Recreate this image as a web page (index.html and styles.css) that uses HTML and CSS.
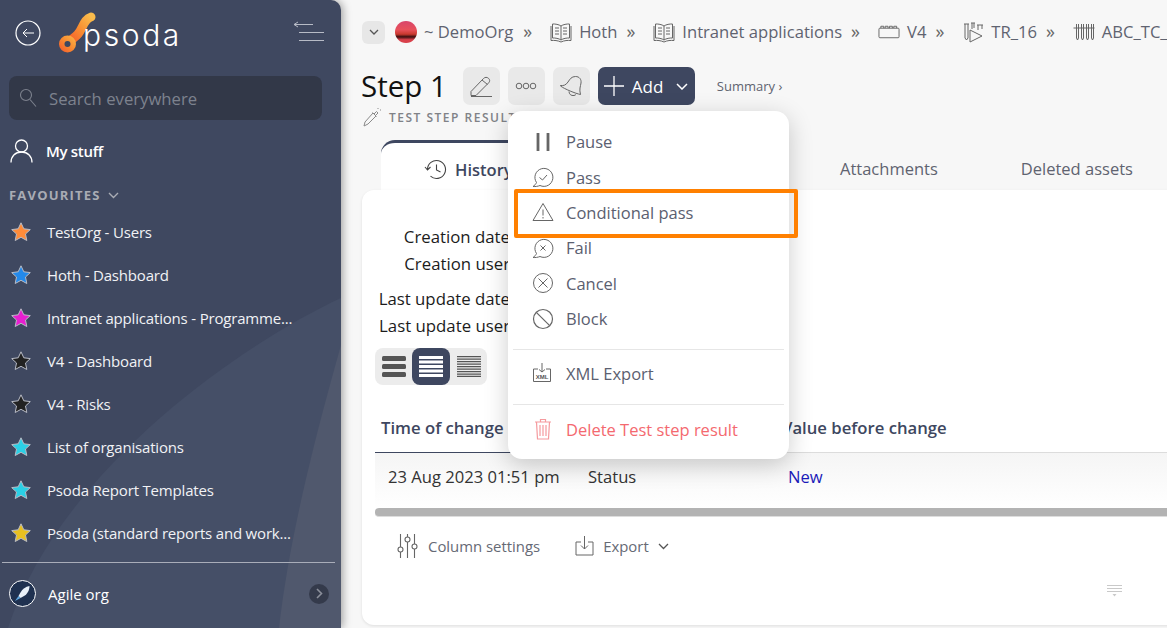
FILE: index.html
```html
<!DOCTYPE html>
<html lang="en">

<head>
    <meta charset="UTF-8">
    <meta name="viewport" content="width=device-width, initial-scale=1.0">
    <title>Step 1 - Psoda</title>
    <link rel="stylesheet" href="styles.css">
</head>

<body>
    <svg class="defs" width="0" height="0">
        <defs>
            <symbol id="star" viewBox="0 0 22 22">
                <path d="M11 1.800l2.800 6 6.500.8-4.800 4.400 1.300 6.500-5.800-3.200-5.800 3.200 1.300-6.500L1.700 8.600l6.500-.8z" stroke="#b9bcc6" stroke-width="1" stroke-linejoin="round" />
            </symbol>
            <symbol id="book" viewBox="0 0 22 22">
                <path d="M11 5C9 3.500 5 2.800 2.500 3v14c2.500-.2 6.500.5 8.500 2 2-1.500 6-2.200 8.500-2V3C17 2.800 13 3.500 11 5zM11 5v14M1 5v14.500c3-.3 7 0 10 1.500 3-1.500 7-1.800 10-1.500V5M5 7h4M5 10h4M5 13h4M13 7h4M13 10h4M13 13h4" fill="none" stroke="#666" stroke-width="1" />
            </symbol>
            <linearGradient id="logo-grad" x1="0" y1="1" x2="1" y2="0">
                <stop offset="0" stop-color="#f4562a" />
                <stop offset="0.55" stop-color="#f88f32" />
                <stop offset="1" stop-color="#f9bb4c" />
            </linearGradient>
        </defs>
    </svg>

    <div class="app">
        <aside class="sidebar">
            <svg class="sidebar-bg" width="341" height="628" viewBox="0 0 341 628">
                <path d="M341 298C240 345 60 470 8 628H341z" fill="#454f67" />
                <path d="M341 345C320 420 290 530 279 628H341z" fill="#50586d" />
            </svg>

            <div class="side-head">
                <svg class="back-icon" width="26" height="26" viewBox="0 0 26 26" fill="none" stroke="#fff">
                    <circle cx="13" cy="13" r="12" stroke-width="1.200" />
                    <path d="M19 13H8M12 9l-4 4 4 4" stroke-width="1" />
                </svg>
                <div class="logo">
                    <svg width="40" height="44" viewBox="0 0 40 44">
                        <path d="M33 7C26 9 25 18 20 24 17 28 13 29 10 33" fill="none" stroke="url(#logo-grad)" stroke-width="9" stroke-linecap="round" />
                        <circle cx="9.500" cy="34" r="8.500" fill="url(#logo-grad)" />
                        <circle cx="9.500" cy="34" r="3" fill="#3f4860" />
                    </svg>
                    <span class="logo-text">psoda</span>
                </div>
                <svg class="menu-icon" width="32" height="22" viewBox="0 0 32 22" fill="none" stroke="#b7bbc6" stroke-width="1">
                    <path d="M1 3.500h19M1 3.500l4-2.500M1 3.500l4 2.500M6 11.500h25M6 19.500h25" />
                </svg>
            </div>

            <div class="search">
                <svg width="18" height="22" viewBox="0 0 18 22" fill="none" stroke="#7d828e" stroke-width="1.100">
                    <circle cx="7" cy="8" r="5.500" />
                    <path d="M11 12.500l6 7" />
                </svg>
                <span>Search everywhere</span>
            </div>

            <div class="my-stuff">
                <svg width="23" height="24" viewBox="0 0 23 24" fill="none" stroke="#fff" stroke-width="1.300">
                    <circle cx="11.500" cy="7" r="6" />
                    <path d="M1 23.500c0-6 4-10.500 10.500-10.500S22 17.500 22 23.500" />
                </svg>
                <span>My stuff</span>
            </div>

            <div class="fav-title">FAVOURITES
                <svg width="11" height="7" viewBox="0 0 11 7" fill="none" stroke="#a9acb4" stroke-width="1.400">
                    <path d="M1 1l4.500 4.500L10 1" />
                </svg>
            </div>

            <ul class="fav-list">
                <li><svg class="star-orange"><use href="#star" /></svg><span>TestOrg - Users</span></li>
                <li><svg class="star-blue"><use href="#star" /></svg><span>Hoth - Dashboard</span></li>
                <li><svg class="star-pink"><use href="#star" /></svg><span>Intranet applications - Programme...</span></li>
                <li><svg class="star-black"><use href="#star" /></svg><span>V4 - Dashboard</span></li>
                <li><svg class="star-black"><use href="#star" /></svg><span>V4 - Risks</span></li>
                <li><svg class="star-cyan"><use href="#star" /></svg><span>List of organisations</span></li>
                <li><svg class="star-cyan"><use href="#star" /></svg><span>Psoda Report Templates</span></li>
                <li><svg class="star-gold"><use href="#star" /></svg><span>Psoda (standard reports and work...</span></li>
            </ul>

            <div class="org-row">
                <svg width="27" height="27" viewBox="0 0 27 27">
                    <circle cx="13.500" cy="13.500" r="13" fill="#1f3150" stroke="#fff" stroke-width="1" />
                    <path d="M20.500 6c-4 .5-7 3-9 6.500l-2 3.500 2 2 3.500-2C18.500 14 20.500 10 20.500 6z" fill="#e8f0f8" />
                    <path d="M9.500 16l-3.500 5 5.500-3z" fill="#5fa8e0" />
                </svg>
                <span>Agile org</span>
                <div class="org-next">
                    <svg width="7" height="11" viewBox="0 0 7 11" fill="none" stroke="#8b8f9b" stroke-width="1.600">
                        <path d="M1 1l4.500 4.500L1 10" />
                    </svg>
                </div>
            </div>
        </aside>

        <main class="main">
            <nav class="crumbs">
                <div class="crumb-toggle">
                    <svg width="10" height="6" viewBox="0 0 10 6" fill="none" stroke="#555" stroke-width="1.300">
                        <path d="M1 1l4 4 4-4" />
                    </svg>
                </div>
                <div class="org-pic"></div>
                <span class="crumb-first">~ DemoOrg</span>
                <span class="sep">»</span>
                <svg class="crumb-icon"><use href="#book" /></svg>
                <span>Hoth</span>
                <span class="sep">»</span>
                <svg class="crumb-icon"><use href="#book" /></svg>
                <span>Intranet applications</span>
                <span class="sep">»</span>
                <svg class="crumb-icon" viewBox="0 0 23 22" fill="none" stroke="#666" stroke-width="1">
                    <rect x="1" y="7" width="21" height="10" rx="1" />
                    <path d="M3 7V5h3v2M7.500 7V5h3v2M12 7V5h3v2M16.500 7V5h3v2" />
                </svg>
                <span>V4</span>
                <span class="sep">»</span>
                <svg class="crumb-icon" viewBox="0 0 22 22" fill="none" stroke="#666" stroke-width="1">
                    <path d="M2 3h5M3 3v14l1.500 2L6 17V3M9 2h4M10 2v6M12 2v5M15 4h6M16 4v5M20 4v4M8 9l12 6-12 6z" />
                </svg>
                <span>TR_16</span>
                <span class="sep">»</span>
                <svg class="crumb-icon" viewBox="0 0 21 22" fill="none" stroke="#666" stroke-width="1">
                    <path d="M0 7h21M3 3v14l1 2 1-2V3M8 3v14l1 2 1-2V3M13 3v14l1 2 1-2V3M18 3v14l1 2 1-2V3" />
                </svg>
                <span>ABC_TC_</span>
            </nav>

            <div class="title-row">
                <h1>Step 1</h1>
                <div class="tool-btn">
                    <svg width="24" height="22" viewBox="0 0 24 22" fill="none" stroke="#666" stroke-width="1">
                        <path d="M2 16.500L14.500 3.500c1.500-1.500 3.500-1.500 5-.2s1.500 3.200.2 4.500L7 20.500H2zM13 5l5.500 4.500M2 21.500h21" />
                    </svg>
                </div>
                <div class="tool-btn">
                    <svg width="22" height="8" viewBox="0 0 22 8" fill="none" stroke="#666" stroke-width="1">
                        <circle cx="4" cy="4" r="2.800" />
                        <circle cx="11" cy="4" r="2.800" />
                        <circle cx="18" cy="4" r="2.800" />
                    </svg>
                </div>
                <div class="tool-btn">
                    <svg width="24" height="22" viewBox="0 0 24 22" fill="none" stroke="#666" stroke-width="1">
                        <path d="M1.500 10.500c3 .5 5.500-.5 7.500-3.500s3.500-5.500 7.500-5.500 6 3 5.500 6.500-2 6-.5 11.500c-5-1-16-5.500-20-8.500zM10 16.500c0 2.500 2 4.500 5 4 .8-.2 1.500-.5 1.900-1" />
                    </svg>
                </div>
                <div class="add-btn">
                    <svg width="20" height="20" viewBox="0 0 20 20" stroke="#fff" stroke-width="1.300">
                        <path d="M10 0v20M0 10h20" />
                    </svg>
                    <span>Add</span>
                    <svg class="add-caret" width="12" height="7" viewBox="0 0 12 7" fill="none" stroke="#fff" stroke-width="1.500">
                        <path d="M1 1l5 5 5-5" />
                    </svg>
                </div>
                <a class="summary">Summary ›</a>
            </div>

            <div class="type-row">
                <svg width="18" height="20" viewBox="0 0 18 20" fill="none" stroke="#8a8a8a" stroke-width="1">
                    <path d="M1 19l1-4L10 6l3 3-8 8zM9.500 5.500l4 4M11 7l2.500-2.500 1.500 1.500-2.500 2.500M15 1v1M17 3h1" />
                </svg>
                <span>TEST STEP RESULT</span>
            </div>

            <div class="tabs">
                <div class="tab tab-active">
                    <svg width="23" height="21" viewBox="0 0 23 21" fill="none" stroke="#444" stroke-width="1.100">
                        <path d="M3.500 10.500a9 9 0 1 1 3 6.700M1 8l2.500 3L6.500 8M12.500 5.500v5.500l4 2" />
                    </svg>
                    <span>History</span>
                </div>
                <div class="tab tab-attach">Attachments</div>
                <div class="tab tab-deleted">Deleted assets</div>
            </div>

            <section class="card">
                <dl class="details">
                    <div class="detail"><dt>Creation date</dt></div>
                    <div class="detail"><dt>Creation user</dt></div>
                    <div class="detail detail-gap"><dt>Last update date</dt></div>
                    <div class="detail"><dt>Last update user</dt></div>
                </dl>

                <div class="density">
                    <div class="density-btn">
                        <svg width="24" height="21" viewBox="0 0 24 21" fill="#555">
                            <rect y="0" width="24" height="5" rx="1.500" />
                            <rect y="8" width="24" height="5" rx="1.500" />
                            <rect y="16" width="24" height="5" rx="1.500" />
                        </svg>
                    </div>
                    <div class="density-btn density-on">
                        <svg width="24" height="21" viewBox="0 0 24 21" fill="#fff">
                            <rect y="0" width="24" height="3" />
                            <rect y="4.500" width="24" height="3" />
                            <rect y="9" width="24" height="3" />
                            <rect y="13.500" width="24" height="3" />
                            <rect y="18" width="24" height="3" />
                        </svg>
                    </div>
                    <div class="density-btn">
                        <svg width="24" height="21" viewBox="0 0 24 21" stroke="#555" stroke-width="1.200">
                            <path d="M0 .6h24M0 3.100h24M0 5.600h24M0 8.100h24M0 10.600h24M0 13.100h24M0 15.600h24M0 18.100h24M0 20.400h24" />
                        </svg>
                    </div>
                </div>

                <div class="table">
                    <div class="th th-sorted">Time of change</div>
                    <div class="th"></div>
                    <div class="th">Value before change</div>
                    <div class="td">23 Aug 2023 01:51 pm</div>
                    <div class="td">Status</div>
                    <div class="td td-link">New</div>
                </div>
                <div class="scrollbar"></div>

                <div class="table-tools">
                    <div class="table-tool">
                        <svg width="21" height="24" viewBox="0 0 21 24" fill="none" stroke="#666" stroke-width="1.100">
                            <path d="M3.500 0v13M3.500 18v6M10.500 0v3M10.500 8v16M17.500 0v10M17.500 15v9" />
                            <circle cx="3.500" cy="15.500" r="2.500" />
                            <circle cx="10.500" cy="5.500" r="2.500" />
                            <circle cx="17.500" cy="12.500" r="2.500" />
                        </svg>
                        <span>Column settings</span>
                    </div>
                    <div class="table-tool tool-export">
                        <svg width="19" height="20" viewBox="0 0 19 20" fill="none" stroke="#666" stroke-width="1">
                            <path d="M6 6H1v13h17V6h-5M9.500 0v13M6 9.500l3.500 3.500L13 9.500" />
                        </svg>
                        <span>Export</span>
                        <svg class="export-caret" width="11" height="7" viewBox="0 0 11 7" fill="none" stroke="#555" stroke-width="1.300">
                            <path d="M1 1l4.500 4.500L10 1" />
                        </svg>
                    </div>
                </div>

                <svg class="page-size" width="15" height="12" viewBox="0 0 15 12" stroke="#c9c9c9" stroke-width="1">
                    <path d="M0 .5h15M0 3.500h15M0 6.500h15" />
                    <path d="M5.500 9h4l-2 2.500z" fill="#c9c9c9" stroke="none" />
                </svg>
            </section>
        </main>
    </div>

    <div class="menu">
        <div class="menu-item">
            <svg width="22" height="22" viewBox="0 0 22 22" stroke="#666" stroke-width="2.800">
                <path d="M6 2v18M16 2v18" />
            </svg>
            <span>Pause</span>
        </div>
        <div class="menu-item">
            <svg width="22" height="22" viewBox="0 0 22 22" fill="none" stroke="#666" stroke-width="1">
                <path d="M4.500 16.500a9 9 0 1 1 3.500 3c-2 .8-4.500 1.200-7 1 1.500-1 3-2.500 3.500-4zM7.500 11.500l3 2.500 4.500-5" />
            </svg>
            <span>Pass</span>
        </div>
        <div class="menu-item">
            <svg width="22" height="20" viewBox="0 0 22 20" fill="none" stroke="#666" stroke-width="1">
                <path d="M11 1.500L1 18.500h20zM11 7.500v6M11 15v1.500" />
            </svg>
            <span>Conditional pass</span>
        </div>
        <div class="menu-item">
            <svg width="22" height="22" viewBox="0 0 22 22" fill="none" stroke="#666" stroke-width="1">
                <path d="M4.500 16.500a9 9 0 1 1 3.500 3c-2 .8-4.500 1.200-7 1 1.500-1 3-2.500 3.500-4zM8.500 8.500l5 5M13.500 8.500l-5 5" />
            </svg>
            <span>Fail</span>
        </div>
        <div class="menu-item">
            <svg width="22" height="22" viewBox="0 0 22 22" fill="none" stroke="#666" stroke-width="1">
                <circle cx="11" cy="11" r="9.500" />
                <path d="M6.500 6.500l9 9M15.500 6.500l-9 9" />
            </svg>
            <span>Cancel</span>
        </div>
        <div class="menu-item">
            <svg width="22" height="22" viewBox="0 0 22 22" fill="none" stroke="#666" stroke-width="1.200">
                <circle cx="11" cy="11" r="9.500" />
                <path d="M4.300 4.300l13.400 13.400" />
            </svg>
            <span>Block</span>
        </div>
        <div class="menu-line"></div>
        <div class="menu-item">
            <svg width="20" height="20" viewBox="0 0 20 20" fill="none" stroke="#666" stroke-width="1">
                <path d="M6 6H1.500v12.500h17V6H14M10 0v9M7 6.500L10 9l3-2.500" />
                <text x="10" y="16" font-size="6" font-weight="700" fill="#555" stroke="none" text-anchor="middle" font-family="Liberation Sans">XML</text>
            </svg>
            <span>XML Export</span>
        </div>
        <div class="menu-line"></div>
        <div class="menu-item menu-danger">
            <svg width="18" height="22" viewBox="0 0 18 22" fill="none" stroke="#f59a9e" stroke-width="1.200">
                <path d="M1 4h16M6.500 4V1.500h5V4M2.500 4l1 17h11l1-17M6 7v11M9 7v11M12 7v11" />
            </svg>
            <span>Delete Test step result</span>
        </div>
    </div>
    <div class="highlight"></div>
</body>

</html>
```

FILE: styles.css
```css
* {
    box-sizing: border-box;
}

html,
body {
    margin: 0;
    height: 100%;
    overflow: hidden;
}

body {
    font-family: "Open Sans", sans-serif;
    background-color: #f7f7f7;
    color: #5b6070;
}

.defs {
    position: absolute;
}

.app {
    display: flex;
    height: 628px;
}

/* sidebar */
.sidebar {
    position: relative;
    flex: 0 0 341px;
    background-color: #3f4860;
    border-top-right-radius: 10px;
    box-shadow: 2px 0 8px rgba(0, 0, 0, 0.35);
    color: #fff;
    z-index: 2;
    overflow: hidden;
    display: flex;
    flex-direction: column;
}

.sidebar-bg {
    position: absolute;
    top: 0;
    left: 0;
}

.sidebar > div,
.sidebar > ul {
    position: relative;
}

.side-head {
    height: 76px;
    flex: none;
    display: flex;
    align-items: flex-start;
    padding-left: 15px;
}

.back-icon {
    margin-top: 20px;
}

.logo {
    display: flex;
    margin: 10px 0 0 17px;
    width: 125px;
}

.logo-text {
    font-family: Inter, sans-serif;
    font-weight: 300;
    font-size: 30px;
    letter-spacing: 2.600px;
    line-height: 40px;
    margin: 5px 0 0 -15px;
}

.menu-icon {
    margin: 21px 0 0 110px;
}

.search {
    flex: none;
    margin: 0 19px 0 9px;
    height: 44px;
    background-color: #323848;
    border-radius: 8px;
    display: flex;
    align-items: center;
    gap: 12px;
    padding-left: 10px;
    font-size: 16.700px;
    color: #7d828e;
}

.my-stuff {
    flex: none;
    height: 44px;
    margin-top: 9px;
    display: flex;
    align-items: center;
    gap: 13px;
    padding-left: 10px;
    font-size: 15px;
    font-weight: 600;
    letter-spacing: -0.300px;
}

.fav-title {
    flex: none;
    height: 38px;
    padding: 13px 0 0 9px;
    font-size: 13px;
    font-weight: 700;
    letter-spacing: 1.200px;
    color: #a9acb4;
    line-height: 18px;
}

.fav-title svg {
    margin: 0 0 1px 3px;
}

.fav-list {
    flex: none;
    list-style: none;
    margin: 0;
    padding: 0;
}

.fav-list li {
    height: 42.900px;
    display: flex;
    align-items: center;
    gap: 15px;
    padding-left: 10px;
    font-size: 15px;
    letter-spacing: -0.180px;
    color: #f1f2f5;
}

.fav-list svg {
    width: 22px;
    height: 22px;
}

.star-orange { fill: #ff8c3a; }
.star-blue { fill: #2389ea; }
.star-pink { fill: #e81fd0; }
.star-black { fill: #222; }
.star-cyan { fill: #2bd0e6; }
.star-gold { fill: #e8c020; }

.org-row {
    flex: none;
    margin: 8px 6px 0 2px;
    border-top: 1px solid #a9adb9;
    height: 60px;
    display: flex;
    align-items: center;
    gap: 12px;
    padding: 2px 6px 0 7px;
    font-size: 15px;
}

.org-next {
    margin-left: auto;
    width: 20px;
    height: 20px;
    border-radius: 50%;
    background-color: #343a4b;
    display: flex;
    align-items: center;
    justify-content: center;
}

/* main column */
.main {
    flex: 1;
    min-width: 0;
    padding: 19px 0 0 20px;
    overflow: hidden;
}

.crumbs {
    display: flex;
    align-items: center;
    height: 24px;
    white-space: nowrap;
    font-size: 16.600px;
    color: #5f6370;
    gap: 7px;
}

.crumb-toggle {
    flex: none;
    width: 23px;
    height: 23px;
    margin: 2px 0 0 1px;
    border-radius: 6px;
    background-color: #e7e7e7;
    display: flex;
    align-items: center;
    justify-content: center;
}

.org-pic {
    flex: none;
    width: 22px;
    height: 22px;
    margin: 2px 0 0 3px;
    border-radius: 50%;
    background: linear-gradient(#d8456b 0%, #e8505a 40%, #c9382e 60%, #3a0f10 72%, #d8404a 85%);
}

.crumb-first {
    margin-right: 1px;
}

.sep {
    margin: 0 11px 0 2px;
    font-size: 18px;
    color: #666;
}

.crumb-icon {
    flex: none;
    width: 22px;
    height: 22px;
    margin-top: 2px;
}

.title-row {
    display: flex;
    align-items: center;
    height: 38px;
    margin-top: 24px;
}

h1 {
    margin: 0 16px 2px 0;
    font-size: 29.500px;
    font-weight: 500;
    color: #111;
}

.tool-btn {
    width: 37px;
    height: 38px;
    margin-right: 8px;
    border-radius: 7px;
    background-color: #e9e9e9;
    display: flex;
    align-items: center;
    justify-content: center;
}

.add-btn {
    width: 97px;
    height: 38px;
    border-radius: 7px;
    background-color: #3e4760;
    color: #fff;
    display: flex;
    align-items: center;
    padding-left: 6px;
    font-size: 17px;
    font-weight: 500;
}

.add-btn span {
    margin-left: 8px;
}

.add-caret {
    margin-left: 13px;
}

.summary {
    margin-left: 22px;
    font-size: 13px;
    color: #5f6370;
}

.type-row {
    display: flex;
    align-items: center;
    gap: 8px;
    height: 20px;
    margin-top: 2px;
    margin-left: 2px;
    font-size: 12px;
    font-weight: 600;
    letter-spacing: 1.500px;
    color: #808287;
    white-space: nowrap;
}

.tabs {
    display: flex;
    height: 50px;
    margin-top: 13px;
    font-size: 16.500px;
    color: #5f6370;
}

.tab {
    display: flex;
    align-items: center;
    padding-top: 6px;
}

.tab-active {
    width: 300px;
    margin-left: 20px;
    padding-left: 43px;
    gap: 8px;
    background-color: #fff;
    border-top: 3px solid #3e4760;
    border-top-left-radius: 14px;
    border-top-right-radius: 14px;
    font-weight: 600;
    color: #3e4760;
}

.tab-attach {
    margin-left: 159px;
}

.tab-deleted {
    margin-left: 83px;
}

/* card */
.card {
    position: relative;
    width: 830px;
    height: 435px;
    margin-left: 1px;
    padding: 0 0 0 13px;
    background-color: #fff;
    border-radius: 12px;
    box-shadow: 0 1px 3px rgba(0, 0, 0, 0.1);
}

.details {
    margin: 0;
    padding-top: 33px;
}

.detail {
    width: 135px;
    height: 27px;
    display: flex;
    align-items: center;
    justify-content: flex-end;
}

.detail-gap {
    margin-top: 8px;
}

.detail dt {
    font-size: 16.800px;
    font-weight: 500;
    color: #1c1c1c;
    white-space: nowrap;
}

.density {
    display: flex;
    width: 112px;
    height: 37px;
    margin-top: 9px;
    border-radius: 8px;
    background-color: #ececec;
}

.density-btn {
    width: 37px;
    display: flex;
    align-items: center;
    justify-content: center;
    border-radius: 8px;
}

.density-on {
    width: 38px;
    background-color: #3e4760;
}

.table {
    display: grid;
    grid-template-columns: 200px 201px 1fr;
    margin-top: 20px;
}

.th {
    height: 48px;
    padding: 9px 0 0 6px;
    font-size: 16.700px;
    font-weight: 600;
    color: #3e4760;
    border-bottom: 1px solid #dcdcdc;
    line-height: 28px;
}

.th-sorted {
    border-bottom-color: #3e4760;
}

.td {
    height: 55px;
    padding: 13px 0 0 13px;
    font-size: 16.600px;
    line-height: 22px;
    color: #333;
    background: linear-gradient(#f5f5f5, #fff);
}

.td-link {
    color: #1a1ab8;
    padding-left: 12px;
}

.scrollbar {
    height: 9px;
    background-color: #b3b3b3;
    border-bottom: 1px solid #ddd;
    border-top-left-radius: 4px;
    border-bottom-left-radius: 4px;
}

.table-tools {
    display: flex;
    gap: 35px;
    margin-top: 17px;
    padding-left: 22px;
    font-size: 14.900px;
    color: #666a75;
}

.table-tool {
    display: flex;
    align-items: center;
    gap: 10px;
}

.tool-export {
    gap: 9px;
}

.page-size {
    position: absolute;
    left: 745px;
    top: 395px;
}

/* overlays */
.menu {
    position: absolute;
    left: 508px;
    top: 111px;
    width: 281px;
    height: 348px;
    padding: 13px 5px 0;
    background-color: #fff;
    border-radius: 14px;
    box-shadow: 0 6px 24px rgba(0, 0, 0, 0.2);
    z-index: 3;
    font-size: 16.500px;
    color: #5b6070;
}

.menu-item {
    display: flex;
    align-items: center;
    height: 35.400px;
    position: relative;
    padding-left: 53px;
}

.menu-item svg {
    position: absolute;
    left: 19px;
    top: 50%;
    transform: translateY(-50%);
}

.menu-line {
    height: 1px;
    margin: 13px 0 5px;
    background-color: #e6e6e6;
}

.menu-danger {
    color: #f4696f;
    margin-top: 7px;
}

.menu-danger svg {
    left: 21px;
}

.highlight {
    position: absolute;
    left: 514px;
    top: 189px;
    width: 284px;
    height: 49px;
    border: 4px solid #ff8000;
    border-radius: 2px;
    z-index: 4;
}
```
